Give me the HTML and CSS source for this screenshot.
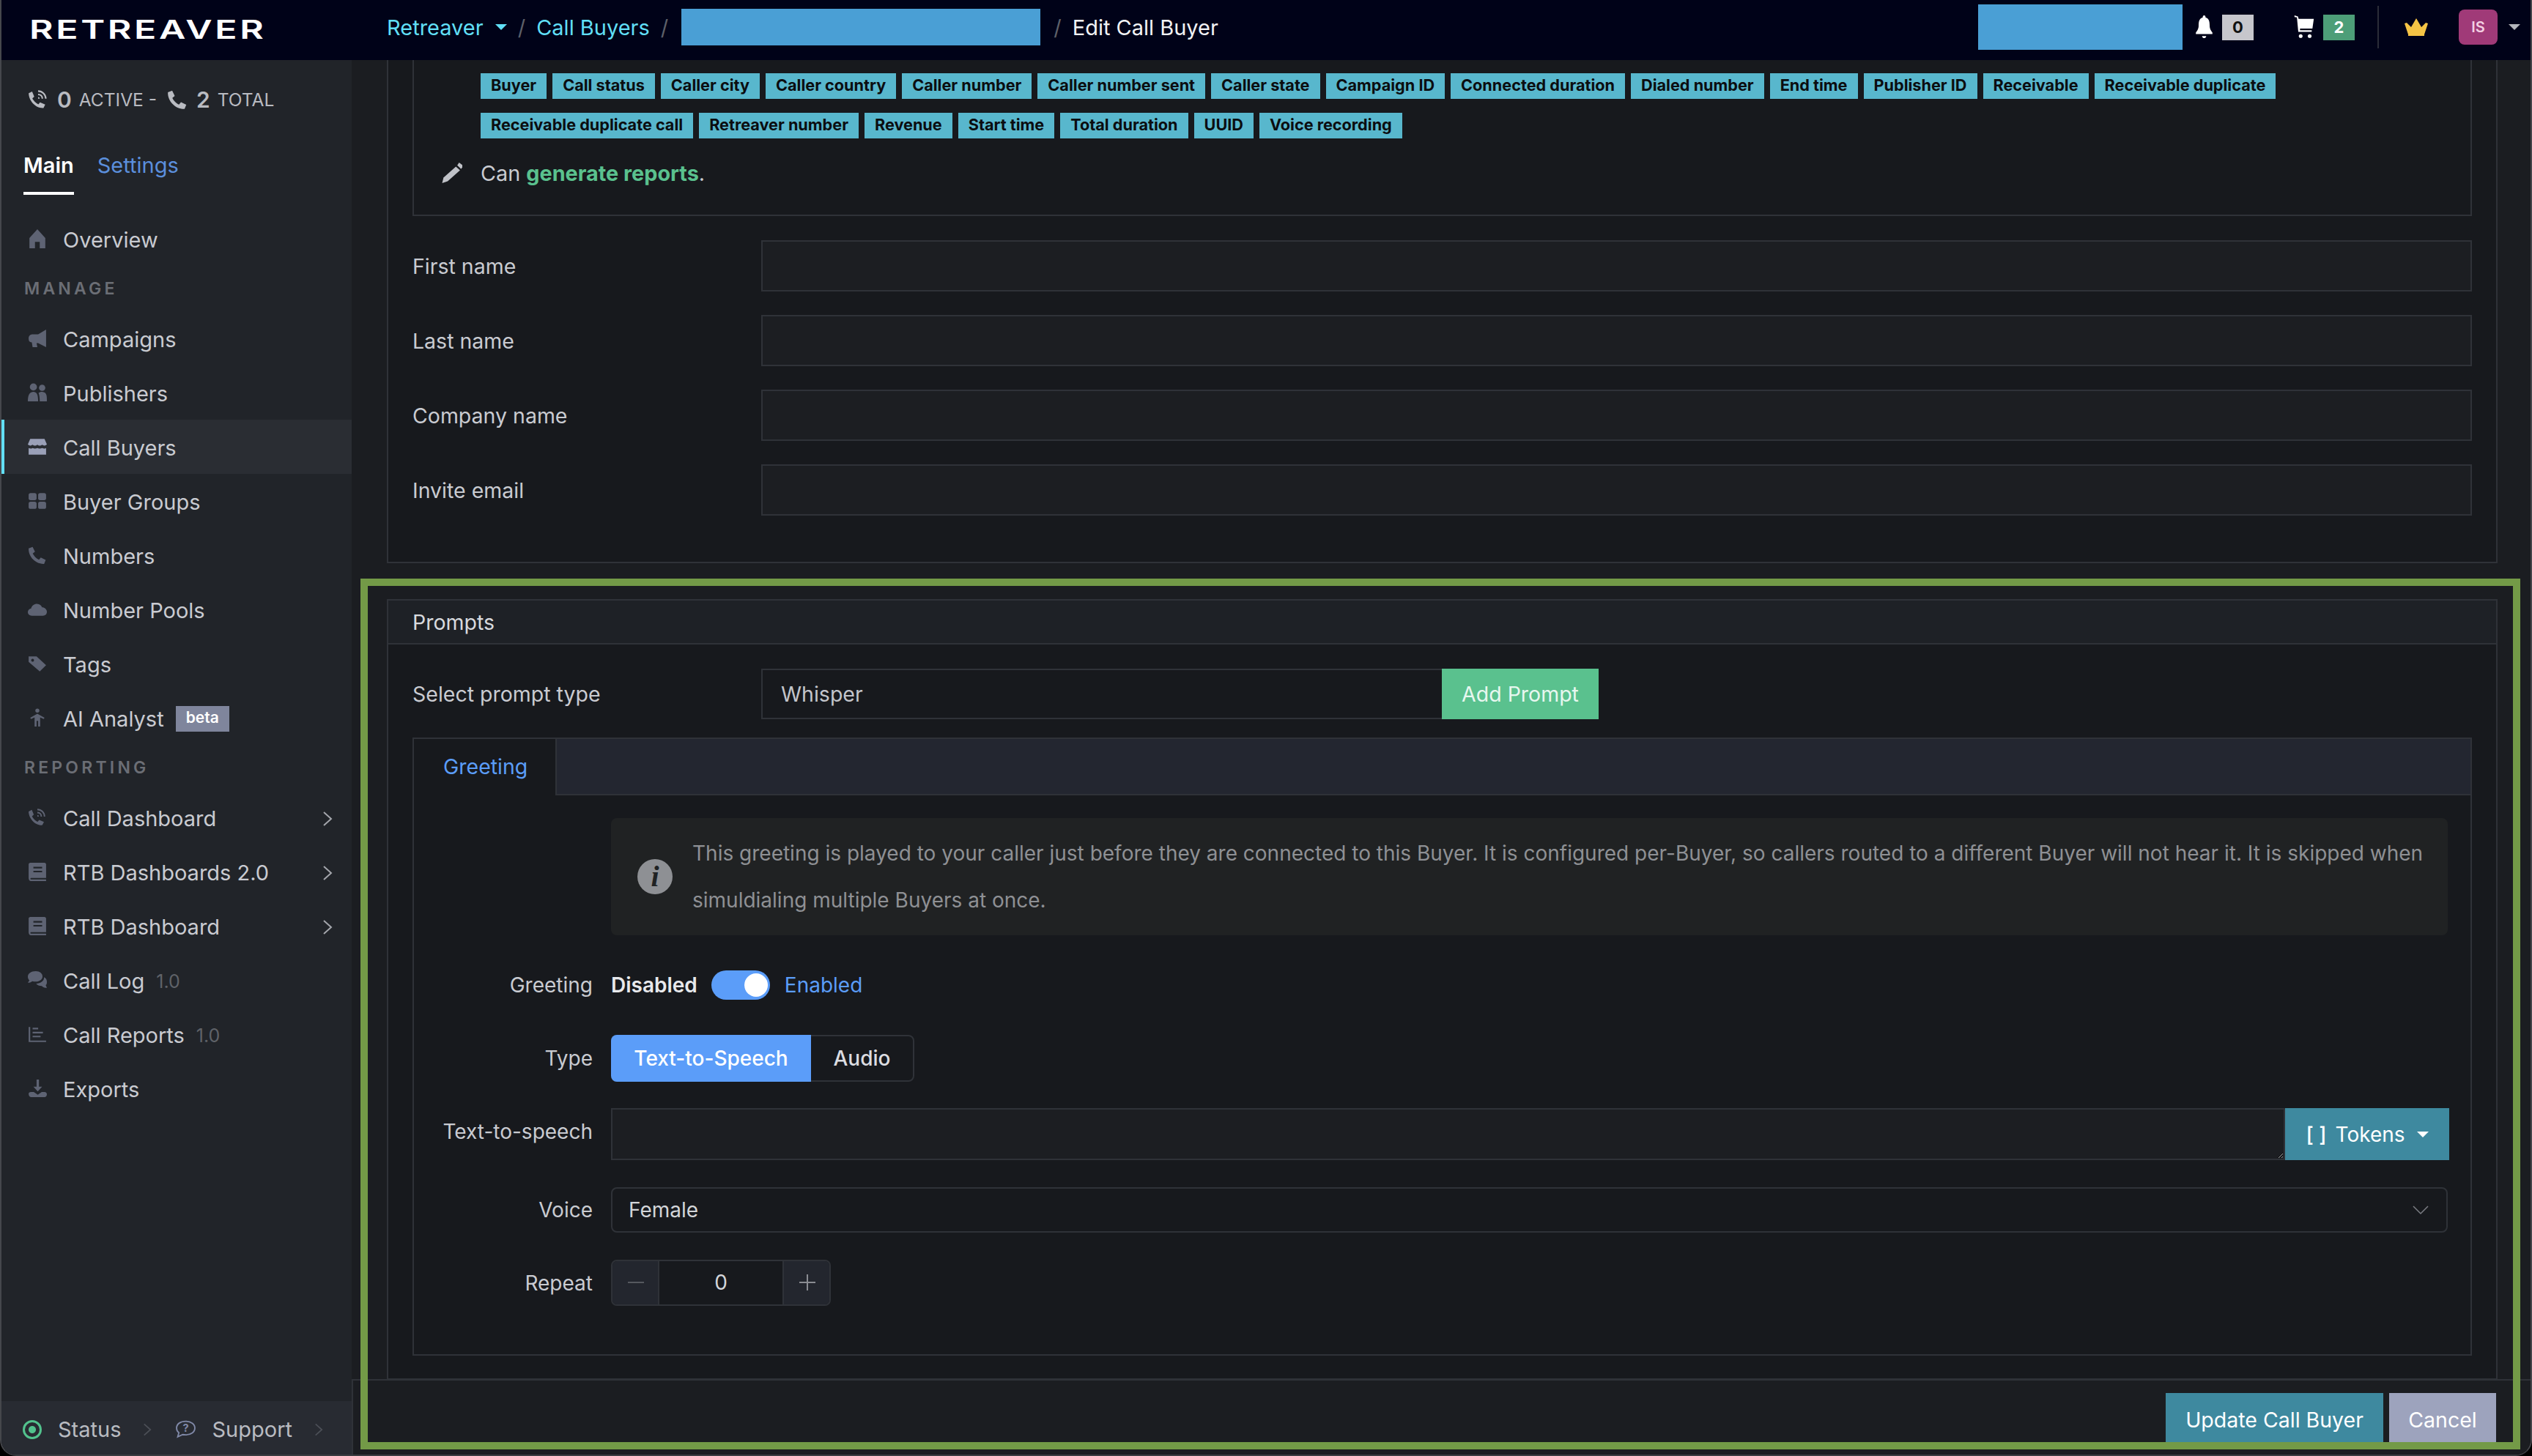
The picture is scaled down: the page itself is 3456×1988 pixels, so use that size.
FILE: index.html
```html
<!DOCTYPE html>
<html lang="en">
<head>
    <meta charset="UTF-8">
    <meta name="viewport" content="width=device-width, initial-scale=1.0">
    <title>Edit Call Buyer</title>
    <link rel="stylesheet" href="styles.css">
</head>
<body>
    <svg class="icon-defs" aria-hidden="true">
        <symbol id="i-phone" viewBox="0 0 24 24"><path d="M1 3.500 6 1.500l3 6.200-2.800 2.300c1.300 3 4.800 6.500 7.800 7.800l2.300-2.800 6.200 3-2 5C10 23.500.5 14 1 3.500z"/></symbol>
        <symbol id="i-calls" viewBox="0 0 24 24"><path d="M1 4.500 5 2.500l2.500 6-2.200 2c1 2.500 4.500 6 7 7l2-2.200 6 2.500-2 4C9 22.500 1 13 1 4.500z"/><path d="M12 2c5 0 9 4 9 9M12 6c3 0 5 2 5 5M12 10c.8 0 1 .3 1 1" fill="none" stroke="currentColor" stroke-width="1.800"/></symbol>
        <symbol id="i-home" viewBox="0 0 24 24"><path d="M12 0 22 11V24H15V16H9V24H2V11z"/></symbol>
        <symbol id="i-horn" viewBox="0 0 24 24"><path d="M23 1V23L13 18H11L12 23H6L5 17C2 17 1 15 1 12 1 9 3 7 6 7H13z"/></symbol>
        <symbol id="i-users" viewBox="0 0 24 24"><circle cx="7" cy="5" r="4.500"/><circle cx="18" cy="6" r="4"/><path d="M0 23C0 14 3 11 7 11s6 3 6 12zM15 23C15 17 14 14 13.500 12.500 15 11 21 10 23 14c1 2 1 5 1 9z"/></symbol>
        <symbol id="i-store" viewBox="0 0 24 24"><path d="M3 2H21L24 9C22 11 20 11 18 9.500 16 11 14 11 12 9.500 10 11 8 11 6 9.500 4 11 2 11 0 9zM1 13.500C3 14.500 5 14.500 6 13.500 8 14.500 10 14.500 12 13.500 14 14.500 16 14.500 18 13.500 20 14.500 22 14.500 23 13.500V22H1z"/></symbol>
        <symbol id="i-grid" viewBox="0 0 24 24"><rect x="1" y="2" width="10" height="9" rx="2.500"/><rect x="13" y="2" width="10" height="9" rx="2.500"/><rect x="1" y="13" width="10" height="9" rx="2.500"/><rect x="13" y="13" width="10" height="9" rx="2.500"/></symbol>
        <symbol id="i-cloud" viewBox="0 0 24 24"><path d="M5 20C2 20 0 18 0 15.500S2 11 4 11C5 7 8 5 11.500 5 15 5 17 7 18 9.500c3 0 6 2.500 6 5.500s-2 5-5 5z"/></symbol>
        <symbol id="i-tag" viewBox="0 0 24 24"><path fill-rule="evenodd" d="M1 3H11L23 14 15 22 1 10zM6 6a1.800 1.800 0 1 0 .01 0z"/></symbol>
        <symbol id="i-person" viewBox="0 0 24 24"><circle cx="12" cy="3" r="2.500"/><path d="M12 7 21 12 20 13.500 15.500 11.500V23H13V16H11V23H8.500V11.500L4 13.500 3 12z"/></symbol>
        <symbol id="i-book" viewBox="0 0 24 24"><path fill-rule="evenodd" d="M3 1H21C22 1 23 2 23 3V20H4C3 20 3 22 4 22H23V24H4C2 24 1 22 1 20V3C1 2 2 1 3 1zM7 6V8H18V6zM7 11V13H18V11z"/></symbol>
        <symbol id="i-chat" viewBox="0 0 24 24"><path d="M10 1C4 1 0 4 0 8c0 2 1 3.500 2 4.500L0 15.500c3 0 4.500-1 5.500-2 1.300.4 3 .5 4.500.5 5 0 8.500-3 8.500-6.500S15 1 10 1zM20.500 8.500c0 5-4.500 8-10 8 1.500 2 4 3 7 3 1 1.500 4 2.500 6.500 2.500l-1.500-3.500c1.500-1 1.500-3 1.500-4.500 0-2.500-1.500-4.500-3.500-5.500z"/></symbol>
        <symbol id="i-chart" viewBox="0 0 24 24"><path d="M2 3V21H23" fill="none" stroke="currentColor" stroke-width="2"/><path d="M6 5H13M6 10H19M6 15H16" fill="none" stroke="currentColor" stroke-width="2"/></symbol>
        <symbol id="i-download" viewBox="0 0 24 24"><path d="M11 1H14V10H18L12.500 16 7 10H11zM1 19C1 17.500 2 16.500 4 16.500H7.500L12.500 20 17.500 16.500H21C23 16.500 24 18 24 19.500S23 23 21 23H4C2 23 1 21 1 19z"/></symbol>
        <symbol id="i-pencil" viewBox="0 0 24 24"><path d="M17 6 21.500 10 8 22 2 24 3.500 18z"/><path d="M18.500 4.500 20.500 1.500 25 5 22.700 8.500z"/></symbol>
        <symbol id="i-bell" viewBox="0 0 24 34"><path d="M12 0c1.500 0 2 1 2 3 5 1.500 6 6 6 12 0 5 2 7 4 10v2H0v-2c2-3 4-5 4-10C4 9 5 4.500 10 3c0-2 .5-3 2-3z"/><path d="M9 30h6c0 2-1.500 3-3 3s-3-1-3-3z"/></symbol>
        <symbol id="i-cart" viewBox="0 0 28 34"><path d="M0 0 5 1.500 6 5H28L26 19H8V21.500H25V24H5.500L3.500 3 0 2.500z"/><circle cx="9" cy="30" r="2.700"/><circle cx="22" cy="30" r="2.700"/></symbol>
        <symbol id="i-crown" viewBox="0 0 32 24"><path d="M3 6 9 12 16 0 23 12 29 6 32 7 27 22H5L0 7z"/><path d="M5 22H27V24H5z"/></symbol>
        <symbol id="i-chevron" viewBox="0 0 14 22"><path d="M2 2 12 11 2 20" fill="none" stroke="currentColor" stroke-width="2"/></symbol>
    </svg>

    <div class="app">
        <header class="topbar">
            <div class="logo-box"><span class="logo">RETREAVER</span></div>
            <nav class="crumbs">
                <a class="crumb-link">Retreaver</a>
                <span class="caret caret-cyan"></span>
                <span class="crumb-sep">/</span>
                <a class="crumb-link">Call Buyers</a>
                <span class="crumb-sep">/</span>
                <span class="redact redact-crumb"></span>
                <span class="crumb-sep">/</span>
                <span class="crumb-current">Edit Call Buyer</span>
            </nav>
            <div class="top-right">
                <span class="redact redact-account"></span>
                <svg class="top-bell"><use href="#i-bell"/></svg>
                <span class="count count-grey">0</span>
                <svg class="top-cart"><use href="#i-cart"/></svg>
                <span class="count count-green">2</span>
                <span class="top-divider"></span>
                <svg class="top-crown"><use href="#i-crown"/></svg>
                <span class="avatar">IS</span>
                <span class="caret caret-grey"></span>
            </div>
        </header>

        <div class="shell">
            <aside class="sidebar">
                <div class="call-stats">
                    <svg class="stat-icon"><use href="#i-calls"/></svg>
                    <b>0</b><span class="stat-label">ACTIVE -</span>
                    <svg class="stat-icon stat-icon-second"><use href="#i-phone"/></svg>
                    <b>2</b><span class="stat-label">TOTAL</span>
                </div>
                <div class="side-tabs">
                    <span class="side-tab active">Main</span>
                    <span class="side-tab">Settings</span>
                </div>
                <ul class="nav">
                    <li class="nav-item"><svg class="nav-icon"><use href="#i-home"/></svg>Overview</li>
                    <li class="nav-title">MANAGE</li>
                    <li class="nav-item"><svg class="nav-icon"><use href="#i-horn"/></svg>Campaigns</li>
                    <li class="nav-item"><svg class="nav-icon"><use href="#i-users"/></svg>Publishers</li>
                    <li class="nav-item active"><svg class="nav-icon"><use href="#i-store"/></svg>Call Buyers</li>
                    <li class="nav-item"><svg class="nav-icon"><use href="#i-grid"/></svg>Buyer Groups</li>
                    <li class="nav-item"><svg class="nav-icon"><use href="#i-phone"/></svg>Numbers</li>
                    <li class="nav-item"><svg class="nav-icon"><use href="#i-cloud"/></svg>Number Pools</li>
                    <li class="nav-item"><svg class="nav-icon"><use href="#i-tag"/></svg>Tags</li>
                    <li class="nav-item"><svg class="nav-icon"><use href="#i-person"/></svg>AI Analyst<span class="beta">beta</span></li>
                    <li class="nav-title">REPORTING</li>
                    <li class="nav-item"><svg class="nav-icon"><use href="#i-calls"/></svg>Call Dashboard<svg class="nav-chevron"><use href="#i-chevron"/></svg></li>
                    <li class="nav-item"><svg class="nav-icon"><use href="#i-book"/></svg>RTB Dashboards 2.0<svg class="nav-chevron"><use href="#i-chevron"/></svg></li>
                    <li class="nav-item"><svg class="nav-icon"><use href="#i-book"/></svg>RTB Dashboard<svg class="nav-chevron"><use href="#i-chevron"/></svg></li>
                    <li class="nav-item"><svg class="nav-icon"><use href="#i-chat"/></svg>Call Log<span class="version">1.0</span></li>
                    <li class="nav-item"><svg class="nav-icon"><use href="#i-chart"/></svg>Call Reports<span class="version">1.0</span></li>
                    <li class="nav-item"><svg class="nav-icon"><use href="#i-download"/></svg>Exports</li>
                </ul>
                <div class="side-footer">
                    <span class="status-dot"></span>
                    <span class="side-link">Status</span>
                    <svg class="foot-chevron"><use href="#i-chevron"/></svg>
                    <svg class="support-icon" viewBox="0 0 26 24">
                        <path d="M13 1.500C6 1.500 1 5 1 10.500c0 2.500 1 4.500 3 6L2.500 22 9 19c1.300.3 2.700.4 4 .4 7 0 12-3.700 12-9S20 1.500 13 1.500z" fill="none" stroke="currentColor" stroke-width="1.800"/>
                        <text x="13" y="15.500" text-anchor="middle" class="support-mark">?</text>
                    </svg>
                    <span class="side-link">Support</span>
                    <svg class="foot-chevron"><use href="#i-chevron"/></svg>
                </div>
            </aside>

            <main class="main">
                <div class="scroll-area">
                    <section class="panel panel-clipped">
                        <div class="permissions">
                            <div class="tag-list">
                                <span class="tag">Buyer</span>
                                <span class="tag">Call status</span>
                                <span class="tag">Caller city</span>
                                <span class="tag">Caller country</span>
                                <span class="tag">Caller number</span>
                                <span class="tag">Caller number sent</span>
                                <span class="tag">Caller state</span>
                                <span class="tag">Campaign ID</span>
                                <span class="tag">Connected duration</span>
                                <span class="tag">Dialed number</span>
                                <span class="tag">End time</span>
                                <span class="tag">Publisher ID</span>
                                <span class="tag">Receivable</span>
                                <span class="tag">Receivable duplicate</span>
                                <span class="tag">Receivable duplicate call</span>
                                <span class="tag">Retreaver number</span>
                                <span class="tag">Revenue</span>
                                <span class="tag">Start time</span>
                                <span class="tag">Total duration</span>
                                <span class="tag">UUID</span>
                                <span class="tag">Voice recording</span>
                            </div>
                            <div class="can-line">
                                <svg class="pencil"><use href="#i-pencil"/></svg>
                                <span>Can <b class="can-green">generate reports</b>.</span>
                            </div>
                        </div>
                        <div class="field-list">
                            <label class="field"><span>First name</span><input class="text-input" type="text"></label>
                            <label class="field"><span>Last name</span><input class="text-input" type="text"></label>
                            <label class="field"><span>Company name</span><input class="text-input" type="text"></label>
                            <label class="field"><span>Invite email</span><input class="text-input" type="text"></label>
                        </div>
                    </section>

                    <section class="panel prompts">
                        <div class="panel-head">Prompts</div>
                        <div class="panel-body">
                            <div class="field">
                                <span>Select prompt type</span>
                                <div class="prompt-pick">
                                    <div class="prompt-value">Whisper</div>
                                    <button class="btn-add">Add Prompt</button>
                                </div>
                            </div>

                            <div class="tab-box">
                                <div class="tab-bar">
                                    <div class="tab-current">Greeting</div>
                                    <div class="tab-rest"></div>
                                </div>
                                <div class="tab-body">
                                    <div class="notice">
                                        <span class="notice-icon">i</span>
                                        <p>This greeting is played to your caller just before they are connected to this Buyer. It is configured per-Buyer, so callers routed to a different Buyer will not hear it. It is skipped when simuldialing multiple Buyers at once.</p>
                                    </div>

                                    <div class="form-row row-greeting">
                                        <span class="row-label">Greeting</span>
                                        <div class="toggle-wrap">
                                            <b class="toggle-off">Disabled</b>
                                            <span class="toggle"><span class="toggle-knob"></span></span>
                                            <span class="toggle-on">Enabled</span>
                                        </div>
                                    </div>

                                    <div class="form-row row-type">
                                        <span class="row-label">Type</span>
                                        <div class="segment">
                                            <span class="seg-on">Text-to-Speech</span>
                                            <span class="seg-off">Audio</span>
                                        </div>
                                    </div>

                                    <div class="form-row row-tts">
                                        <span class="row-label row-label-high">Text-to-speech</span>
                                        <div class="tts-group">
                                            <textarea class="tts-input"></textarea>
                                            <button class="btn-tokens"><span class="token-mark">[ ]</span>Tokens<span class="caret caret-white"></span></button>
                                        </div>
                                    </div>

                                    <div class="form-row row-voice">
                                        <span class="row-label">Voice</span>
                                        <div class="voice-select">
                                            Female
                                            <svg class="voice-chevron" viewBox="0 0 22 14"><path d="M1 2 11 12 21 2" fill="none" stroke="currentColor" stroke-width="1.500"/></svg>
                                        </div>
                                    </div>

                                    <div class="form-row row-repeat">
                                        <span class="row-label">Repeat</span>
                                        <div class="stepper">
                                            <span class="step-btn step-minus"></span>
                                            <span class="step-value">0</span>
                                            <span class="step-btn step-plus"></span>
                                        </div>
                                    </div>
                                </div>
                            </div>
                        </div>
                    </section>
                </div>

                <footer class="form-actions">
                    <button class="btn-update">Update Call Buyer</button>
                    <button class="btn-cancel">Cancel</button>
                </footer>
            </main>
        </div>

        <div class="highlight-frame"></div>
    </div>
</body>
</html>
```

FILE: styles.css
```css
* {
    box-sizing: border-box;
}
html, body {
    margin: 0;
    padding: 0;
    height: 100%;
    background: #000;
}
body {
    font-family: Inter, "Noto Sans", sans-serif;
    font-size: 28.5px;
    color: #c9cbd1;
    overflow: hidden;
}
.icon-defs {
    display: none;
}
.app {
    position: relative;
    width: 3456px;
    height: 1988px;
    display: flex;
    flex-direction: column;
    overflow: hidden;
    border-radius: 0 0 22px 22px;
    border-left: 2px solid #45474c;
    border-right: 2px solid #45474c;
    border-bottom: 2px solid #3a3c40;
}

/* top bar */
.topbar {
    height: 82px;
    flex: none;
    display: flex;
    align-items: center;
    padding-bottom: 8px;
    background: #000218;
}
.logo-box {
    width: 526px;
    padding: 5px 0 0 38px;
    flex: none;
}
.logo {
    font-size: 36px;
    font-weight: 600;
    letter-spacing: 2.6px;
    color: #fff;
    line-height: 36px;
    display: block;
    transform: scaleX(1.39);
    transform-origin: left center;
}
.crumbs {
    display: flex;
    align-items: center;
    font-size: 29px;
}
.crumb-link {
    color: #60dff6;
}
.crumb-current {
    color: #f1f2f4;
}
.crumb-sep {
    color: #5d6069;
    margin: 0 15px;
}
.caret {
    width: 0;
    height: 0;
    border-left: 8px solid transparent;
    border-right: 8px solid transparent;
    border-top: 8px solid #60dff6;
    display: inline-block;
}
.caret-cyan {
    margin-left: 16px;
}
.caret-grey {
    border-top-color: #b4b6bc;
    margin-left: 15px;
}
.caret-white {
    border-top-color: #fff;
    margin-left: 16px;
}
.redact {
    background: #4a9fd5;
    display: block;
}
.redact-crumb {
    width: 490px;
    height: 50px;
    margin-left: 3px;
    margin-right: 3px;
}
.top-right {
    margin-left: auto;
    display: flex;
    align-items: center;
    padding-right: 14px;
}
.redact-account {
    width: 279px;
    height: 62px;
    margin-right: 18px;
}
.top-bell {
    width: 23px;
    height: 32px;
    fill: #fff;
}
.top-cart {
    width: 28px;
    height: 32px;
    fill: #fff;
    margin-left: 55px;
}
.count {
    height: 35px;
    width: 43px;
    margin-left: 13px;
    display: flex;
    align-items: center;
    justify-content: center;
    font-size: 22px;
    font-weight: 700;
}
.count-grey {
    background: #c6c6cc;
    color: #111;
}
.count-green {
    background: #4d9e78;
    color: #fff;
    margin-left: 12px;
}
.top-divider {
    width: 2px;
    height: 58px;
    background: #2a2c38;
    margin-left: 31px;
}
.top-crown {
    width: 32px;
    height: 24px;
    fill: #f5c445;
    margin-left: 35px;
}
.avatar {
    width: 53px;
    height: 48px;
    margin-left: 42px;
    border-radius: 8px;
    background: #a03a78;
    color: #f3cfe2;
    font-size: 20px;
    font-weight: 600;
    display: flex;
    align-items: center;
    justify-content: center;
}

.shell {
    flex: 1;
    display: flex;
    min-height: 0;
}

/* sidebar */
.sidebar {
    width: 478px;
    flex: none;
    font-size: 29px;
    background: #212429;
    display: flex;
    flex-direction: column;
}
.call-stats {
    height: 48px;
    margin-top: 30px;
    padding-left: 36px;
    display: flex;
    align-items: center;
    color: #b9bbc1;
    font-size: 24.5px;
}
.call-stats b {
    font-size: 30px;
    font-weight: 600;
    margin-right: 10px;
    margin-left: 12px;
}
.stat-icon {
    width: 28px;
    height: 28px;
    fill: #b9bbc1;
    color: #b9bbc1;
}
.stat-icon-second {
    margin-left: 14px;
}
.stat-label {
    font-weight: 400;
}
.side-tabs {
    margin-top: 40px;
    padding-left: 30px;
    height: 66px;
    display: flex;
    gap: 32px;
}
.side-tab {
    color: #5b8fdc;
    height: 66px;
    line-height: 52px;
}
.side-tab.active {
    color: #fff;
    font-weight: 600;
    border-bottom: 4px solid #fff;
}
.nav {
    list-style: none;
    margin: 23px 0 0;
    padding: 0;
}
.nav-item {
    height: 74px;
    display: flex;
    align-items: center;
    padding: 3px 0 0 84px;
    position: relative;
    color: #c9cbd1;
}
.nav-item.active {
    background: #2a2d33;
    box-shadow: inset 6px 0 0 #62dff5;
    margin-left: -2px;
    padding-left: 86px;
}
.nav-item.active .nav-icon {
    fill: #9aa0b8;
    left: 38px;
}
.nav-icon {
    position: absolute;
    left: 36px;
    top: 24px;
    width: 26px;
    height: 26px;
    fill: #5e6373;
    color: #5e6373;
}
.nav-chevron {
    width: 14px;
    height: 22px;
    margin-left: auto;
    margin-right: 26px;
    color: #a4a6ac;
}
.nav-title {
    height: 62px;
    padding-left: 31px;
    display: flex;
    align-items: center;
    font-size: 23px;
    font-weight: 600;
    letter-spacing: 4.2px;
    color: #6b6e75;
}
.beta {
    background: #7f859c;
    color: #fff;
    font-size: 21px;
    font-weight: 600;
    padding: 0 14px;
    height: 35px;
    line-height: 31px;
    margin-left: 16px;
}
.version {
    color: #5f6268;
    font-size: 25px;
    margin-left: 16px;
}
.side-footer {
    margin-top: auto;
    height: 73px;
    background: #282b32;
    display: flex;
    align-items: center;
    padding: 4px 0 0 29px;
}
.status-dot {
    width: 26px;
    height: 26px;
    border-radius: 50%;
    border: 3px solid #52c28d;
    background: radial-gradient(circle, #52c28d 0 4.500px, transparent 5.500px);
}
.side-link {
    color: #b9bbc1;
}
.status-dot + .side-link {
    margin-left: 22px;
}
.foot-chevron {
    width: 12px;
    height: 20px;
    color: #4c4f57;
    margin-left: 30px;
}
.support-icon {
    width: 27px;
    height: 25px;
    color: #8089a8;
    margin-left: 33px;
    margin-right: 22px;
}
.support-mark {
    font-family: Inter, sans-serif;
    font-size: 14px;
    font-weight: 700;
    fill: #8089a8;
}

/* main column */
.main {
    flex: 1;
    min-width: 0;
    background: #1b1d21;
    display: flex;
    flex-direction: column;
}
.scroll-area {
    flex: 1;
    min-height: 0;
    padding: 0 45px 0 48px;
    overflow: hidden;
}
.panel {
    border: 2px solid #2f3238;
    background: #17191d;
}
.panel-clipped {
    border-top: 0;
    height: 687px;
    padding: 0 33px;
}
.permissions {
    height: 213px;
    border: 2px solid #2f3238;
    border-top: 0;
    padding: 18px 0 0 91px;
    position: relative;
}
.tag-list {
    display: flex;
    flex-wrap: wrap;
    gap: 19px 8px;
}
.tag {
    height: 35px;
    line-height: 33px;
    padding: 0 14px;
    background: #58b7cd;
    color: #0b0d10;
    font-size: 21.65px;
    font-weight: 700;
    white-space: nowrap;
}
.can-line {
    margin-top: 30px;
    display: flex;
    align-items: center;
    font-size: 28.8px;
}
.can-line .pencil {
    position: absolute;
    left: 36px;
    top: 138px;
    width: 30px;
    height: 30px;
    fill: #c0c2c8;
}
.can-green {
    color: #5ac18e;
    font-weight: 700;
}
.field-list {
    margin-top: 33px;
    display: flex;
    flex-direction: column;
    gap: 32px;
}
.field {
    display: flex;
    align-items: center;
}
.field > span {
    width: 476px;
    flex: none;
}
.text-input {
    flex: 1;
    height: 70px;
    background: #1c1e22;
    border: 2px solid #2f3238;
    outline: none;
}
.prompts {
    margin-top: 49px;
    height: 1066px;
}
.panel-head {
    height: 60px;
    padding-left: 33px;
    background: #1e2126;
    border-bottom: 2px solid #2f3238;
    color: #d8dade;
    line-height: 60px;
}
.panel-body {
    padding: 33px 33px 0;
}
.prompt-pick {
    display: flex;
    height: 69px;
}
.prompt-value {
    width: 929px;
    padding-left: 25px;
    line-height: 65px;
    border: 2px solid #2f3238;
    border-right: 0;
    color: #c3c5cb;
}
.btn-add {
    width: 214px;
    border: 0;
    background: #5ac18e;
    color: #e7f7ef;
    font: inherit;
}
.tab-box {
    margin-top: 25px;
    height: 844px;
    border: 2px solid #2f3238;
}
.tab-bar {
    height: 77px;
    display: flex;
}
.tab-current {
    width: 195px;
    padding-left: 40px;
    line-height: 76px;
    color: #5b9df9;
    border-right: 2px solid #2f3238;
}
.tab-rest {
    flex: 1;
    background: #232630;
    border-bottom: 2px solid #2f3238;
}
.tab-body {
    padding: 31px 31px 0 269px;
    font-size: 28px;
}
.notice {
    height: 160px;
    display: flex;
    align-items: center;
    background: #202223;
    border-radius: 8px;
    padding: 0 28px 0 36px;
}
.notice-icon {
    width: 48px;
    height: 48px;
    flex: none;
    border-radius: 50%;
    background: #8e9094;
    color: #202223;
    font-family: "Liberation Serif", serif;
    font-size: 40px;
    font-style: italic;
    font-weight: 700;
    line-height: 48px;
    text-align: center;
}
.notice p {
    margin: 0 0 0 27px;
    color: #8e9094;
    line-height: 64px;
}
.form-row {
    display: flex;
    align-items: center;
}
.row-label {
    width: 246px;
    margin-left: -271px;
    margin-right: 25px;
    text-align: right;
    flex: none;
}
.row-label-high {
    margin-top: -8px;
}
.row-greeting {
    margin-top: 48px;
    height: 40px;
}
.toggle-wrap {
    display: flex;
    align-items: center;
}
.toggle-off {
    color: #e8e9ec;
    font-weight: 600;
}
.toggle {
    width: 80px;
    height: 40px;
    margin: 0 20px 0 19px;
    border-radius: 20px;
    background: #5b9df9;
    display: flex;
    align-items: center;
    justify-content: flex-end;
    padding-right: 3px;
}
.toggle-knob {
    width: 32px;
    height: 32px;
    border-radius: 50%;
    background: #fff;
}
.toggle-on {
    color: #5b9df9;
}
.row-type {
    margin-top: 48px;
    height: 64px;
}
.segment {
    display: flex;
    height: 64px;
    border: 2px solid #2f3238;
    border-radius: 8px;
    width: 414px;
}
.seg-on {
    width: 273px;
    margin: -2px 0 -2px -2px;
    background: #5b9df9;
    color: #fff;
    font-weight: 500;
    text-align: center;
    line-height: 64px;
    border-radius: 8px 0 0 8px;
}
.seg-off {
    flex: 1;
    text-align: center;
    line-height: 60px;
    color: #dcdde1;
    font-weight: 500;
}
.row-tts {
    margin-top: 36px;
    height: 71px;
}
.tts-group {
    flex: 1;
    display: flex;
    height: 71px;
    margin-right: -2px;
}
.tts-input {
    width: 2285px;
    height: 71px;
    background: #1c1e22;
    border: 2px solid #2f3238;
    outline: none;
}
.btn-tokens {
    flex: 1;
    border: 0;
    background: #3e899f;
    color: #fff;
    font: inherit;
    display: flex;
    align-items: center;
    justify-content: center;
}
.token-mark {
    font-weight: 500;
    margin-right: 12px;
}
.row-voice {
    margin-top: 37px;
    height: 62px;
}
.voice-select {
    flex: 1;
    height: 62px;
    border: 2px solid #2f3238;
    border-radius: 8px;
    padding: 0 24px 0 22px;
    display: flex;
    align-items: center;
    justify-content: space-between;
    color: #d3d5d9;
}
.voice-chevron {
    width: 22px;
    height: 14px;
    color: #7b7d83;
}
.row-repeat {
    margin-top: 37px;
    height: 63px;
}
.stepper {
    display: flex;
    width: 300px;
    height: 63px;
    border: 2px solid #2f3238;
    border-radius: 8px;
    overflow: hidden;
}
.step-btn {
    width: 64px;
    background: #23262e;
    position: relative;
    flex: none;
}
.step-minus {
    border-right: 2px solid #2f3238;
}
.step-plus {
    border-left: 2px solid #2f3238;
}
.step-minus::before,
.step-plus::before,
.step-plus::after {
    content: "";
    position: absolute;
    left: 21px;
    top: 28px;
    width: 22px;
    height: 2px;
    background: #8a8c92;
}
.step-minus::before {
    background: #55585f;
}
.step-plus::after {
    transform: rotate(90deg);
}
.step-value {
    flex: 1;
    text-align: center;
    line-height: 59px;
    color: #d3d5d9;
}

/* sticky footer */
.form-actions {
    height: 103px;
    flex: none;
    border-top: 2px solid #2f3238;
    border-left: 2px solid #2f3238;
    padding: 17px 47px 0 0;
    display: flex;
    justify-content: flex-end;
    gap: 8px;
}
.form-actions button {
    height: 72px;
    padding-top: 2px;
    border: 0;
    color: #fff;
    font: inherit;
}
.btn-update {
    width: 297px;
    background: #3e899f;
}
.btn-cancel {
    width: 146px;
    background: #9da3bd;
}

/* annotation drawn over the screenshot */
.highlight-frame {
    position: absolute;
    left: 490px;
    top: 790px;
    width: 2948px;
    height: 1189px;
    border: 10px solid #739a47;
    pointer-events: none;
}
```
